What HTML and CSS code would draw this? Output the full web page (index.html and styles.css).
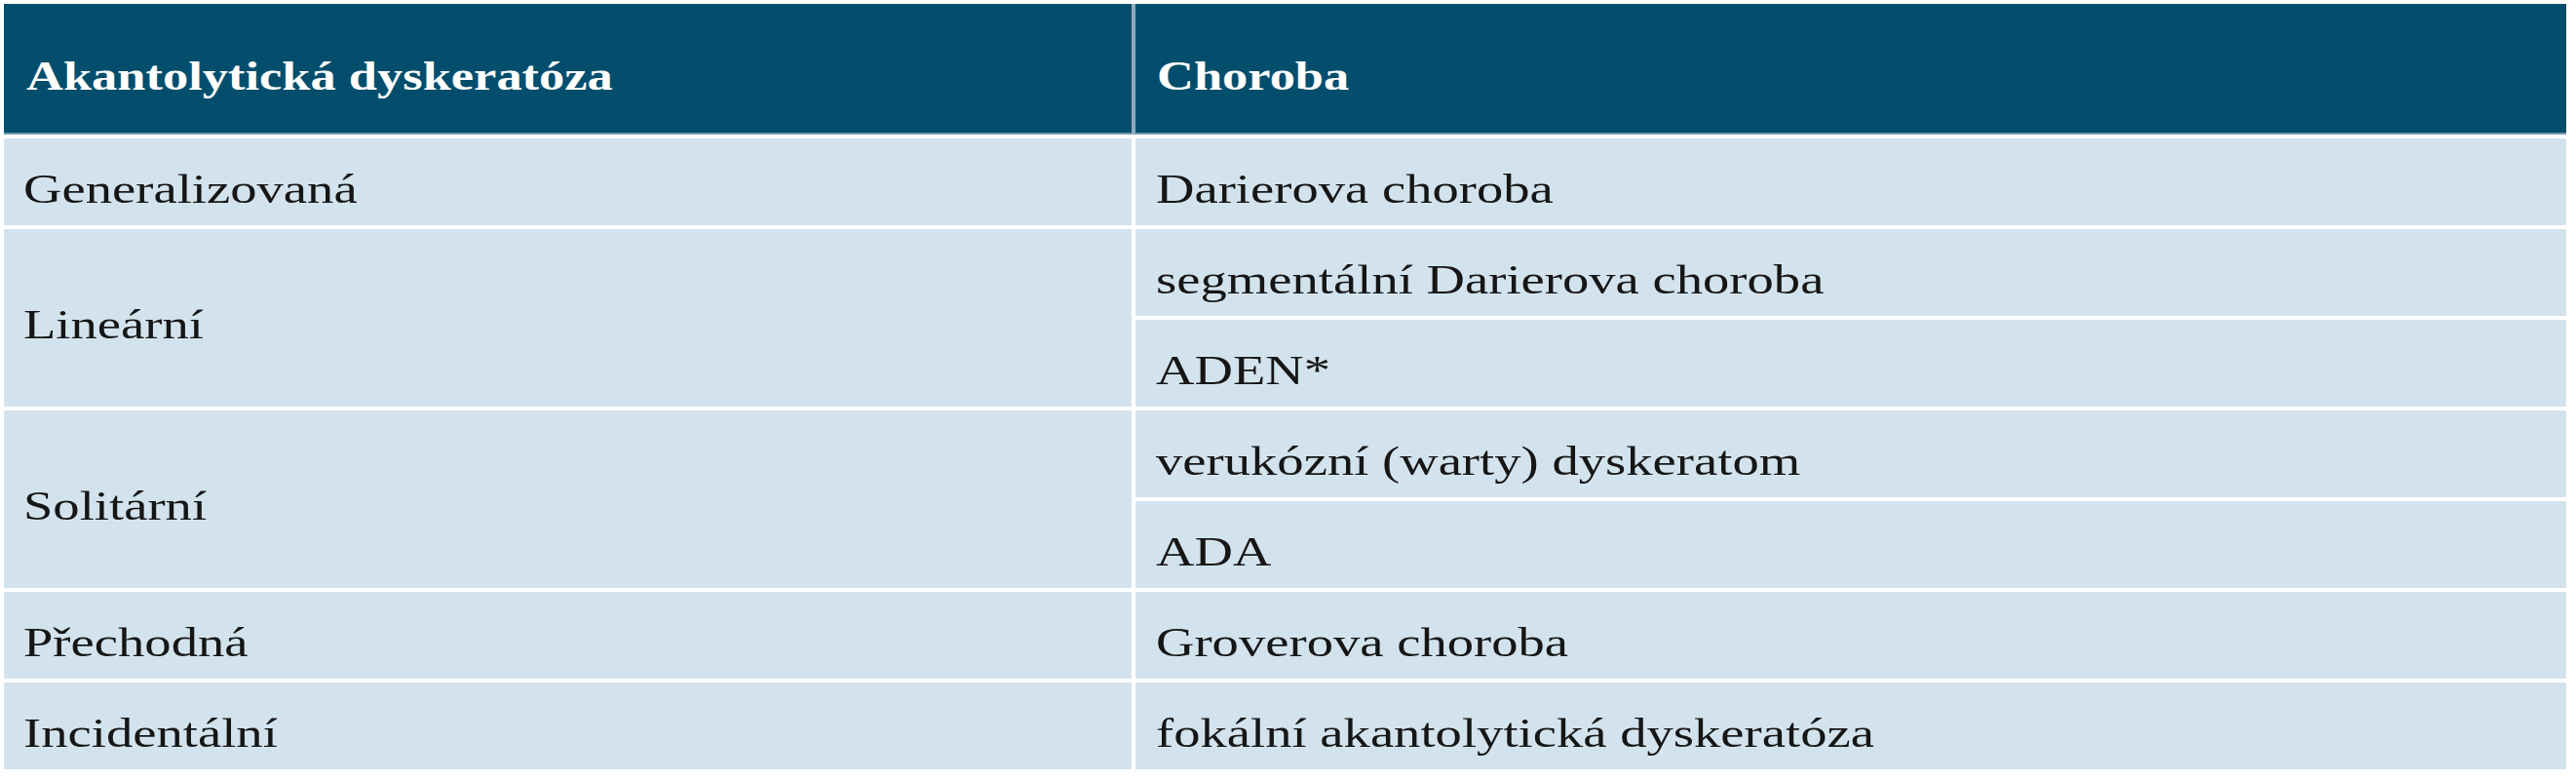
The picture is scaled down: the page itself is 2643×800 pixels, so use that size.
FILE: index.html
```html
<!DOCTYPE html>
<html lang="cs">
<head>
<meta charset="utf-8">
<title>Akantolytická dyskeratóza</title>
<link rel="stylesheet" href="styles.css">
</head>
<body>
<table class="grid">
  <colgroup>
    <col class="col-a">
    <col class="col-b">
  </colgroup>
  <thead>
    <tr>
      <th class="head head-a"><span class="txt">Akantolytická dyskeratóza</span></th>
      <th class="head head-b"><span class="txt">Choroba</span></th>
    </tr>
  </thead>
  <tbody>
    <tr>
      <td class="cell cell-a"><span class="txt">Generalizovaná</span></td>
      <td class="cell cell-b"><span class="txt">Darierova choroba</span></td>
    </tr>
    <tr>
      <td class="cell cell-a" rowspan="2"><span class="txt">Lineární</span></td>
      <td class="cell cell-b"><span class="txt">segmentální Darierova choroba</span></td>
    </tr>
    <tr>
      <td class="cell cell-b"><span class="txt">ADEN*</span></td>
    </tr>
    <tr>
      <td class="cell cell-a" rowspan="2"><span class="txt">Solitární</span></td>
      <td class="cell cell-b"><span class="txt">verukózní (warty) dyskeratom</span></td>
    </tr>
    <tr>
      <td class="cell cell-b"><span class="txt">ADA</span></td>
    </tr>
    <tr>
      <td class="cell cell-a"><span class="txt">Přechodná</span></td>
      <td class="cell cell-b"><span class="txt">Groverova choroba</span></td>
    </tr>
    <tr>
      <td class="cell cell-a"><span class="txt">Incidentální</span></td>
      <td class="cell cell-b"><span class="txt">fokální akantolytická dyskeratóza</span></td>
    </tr>
  </tbody>
</table>
</body>
</html>
```

FILE: styles.css
```css
html, body {
  margin: 0;
  padding: 0;
  background: #ffffff;
}

body {
  font-family: "Liberation Serif", "Times New Roman", serif;
  font-size: 43px;
  color: #161616;
}

.grid {
  border-collapse: separate;
  border-spacing: 4px;
  table-layout: fixed;
  width: 2637px;
  background: #ffffff;
}

.col-a { width: 1157px; }
.col-b { width: 1468px; }

.head {
  background: #034e6c;
  color: #ffffff;
  font-weight: 700;
  text-align: left;
  vertical-align: middle;
  height: 134px;
  box-sizing: border-box;
  padding: 14px 0 0 0;
  border-bottom: 2px solid #6f98b0;
  line-height: normal;
}

.head-a {
  padding-left: 23px;
  box-shadow: 4px 0 0 #8fabbc;
}

.head-b { padding-left: 22px; }

.head .txt { transform: scaleX(1.22); }

.cell {
  background: #d3e3ee;
  vertical-align: middle;
  height: 89px;
  box-sizing: border-box;
  padding: 13px 0 0 0;
  line-height: normal;
  white-space: nowrap;
}

.cell-a { padding-left: 20px; }
.cell-b { padding-left: 21px; }

.txt {
  display: inline-block;
  transform: scaleX(1.27);
  transform-origin: left center;
  white-space: nowrap;
}
```
